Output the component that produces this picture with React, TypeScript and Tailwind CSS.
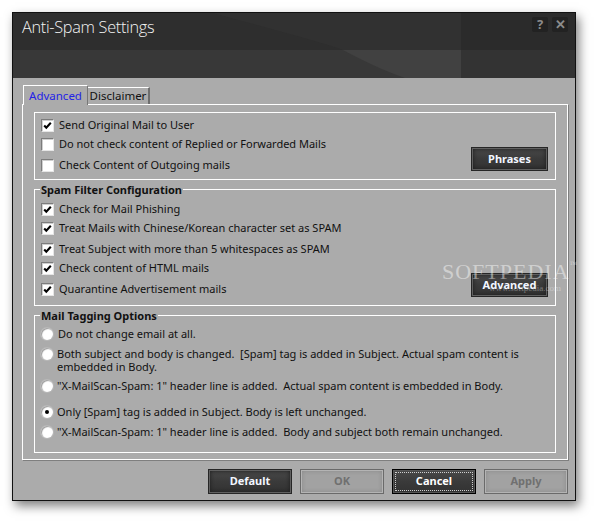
import React from "react";

function Check({ checked }: { checked: boolean }) {
  return (
    <span className="relative w-[13px] h-[13px] shrink-0 bg-white border border-t-[#7c7c7c] border-l-[#7c7c7c] border-r-[#e6e6e6] border-b-[#e6e6e6] shadow-[inset_1px_1px_0_#cfcfcf]">
      {checked && (
        <svg viewBox="0 0 11 11" className="absolute left-0 top-0 w-[11px] h-[11px]">
          <path d="M2.2 5.4 L4.3 7.6 L8.8 2.8" stroke="#000" strokeWidth="2.1" fill="none" />
        </svg>
      )}
    </span>
  );
}

function Radio({ checked }: { checked: boolean }) {
  return (
    <span className="relative w-[12px] h-[12px] shrink-0 rounded-full bg-white shadow-[inset_1px_1px_1px_#9a9a9a,0_0_0_1px_#b8b8b8] flex items-center justify-center">
      {checked && <span className="w-[4px] h-[4px] rounded-full bg-black" />}
    </span>
  );
}

function CheckRow({ label, checked, extra }: { label: string; checked: boolean; extra?: string }) {
  return (
    <div className={"flex items-center gap-[5px] h-[19px] " + (extra || "")}>
      <Check checked={checked} />
      <span className="whitespace-pre">{label}</span>
    </div>
  );
}

function RadioRow({ children, checked, extra }: { children: React.ReactNode; checked: boolean; extra?: string }) {
  return (
    <div className={"flex items-start gap-[4px] " + (extra || "")}>
      <span className="h-[19px] flex items-center">
        <Radio checked={checked} />
      </span>
      <span className="whitespace-pre leading-[13px] pt-[3px]">{children}</span>
    </div>
  );
}

function DarkButton({ label, extra }: { label: string; extra?: string }) {
  return (
    <button className={"w-[77px] h-[24px] border border-[#262626] bg-[linear-gradient(#4a4a4a,#3a3a3a_50%,#323232)] shadow-[inset_0_0_0_1px_#606060,inset_0_0_4px_1px_#1c1c1c] text-[#f2f6ff] font-bold text-[11px] " + (extra || "")}>
      {label}
    </button>
  );
}

export default function App() {
  return (
    <div className="w-[596px] h-[522px] bg-white pt-[12px] pl-[12px] font-['Noto_Sans',sans-serif] text-[11px] text-[#111]">
      <div className="w-[564px] h-[489px] border border-[#111] bg-[#ababab] shadow-[3px_5px_10px_rgba(0,0,0,0.5)] flex flex-col">
        {/* Title bar */}
        <div className="relative h-[65px] shrink-0 flex items-start justify-between">
          <svg className="absolute inset-0 w-full h-full" viewBox="0 0 562 65" preserveAspectRatio="none">
            <rect x="0" y="0" width="562" height="65" fill="#2e2e2e" />
            <rect x="0" y="37" width="448" height="28" fill="#383838" />
            <path d="M200 0 C 250 14, 300 26, 330 37 L 448 37 L 448 0 Z" fill="#313131" />
            <path d="M330 37 C 350 48, 372 58, 392 65 L 448 65 L 448 37 Z" fill="#414141" />
            <rect x="448" y="0" width="114" height="37" fill="#2b2b2b" />
            <rect x="448" y="37" width="114" height="28" fill="#333333" />
          </svg>
          <span className="relative ml-[9px] mt-[3px] text-[16.3px] leading-[22px] font-light tracking-[-0.3px] text-[#f4f4f4] font-['Open_Sans',sans-serif]">
            Anti-Spam Settings
          </span>
          <div className="relative flex gap-[4px] mt-[4px] mr-[7px]">
            <span className="w-[16px] h-[15px] rounded-[2px] bg-[#222] text-[#8c8c8c] font-bold text-[13px] leading-[15px] flex items-center justify-center">?</span>
            <span className="w-[16px] h-[15px] rounded-[2px] bg-[#222] text-[#8c8c8c] font-bold text-[13px] leading-[15px] flex items-center justify-center">✕</span>
          </div>
        </div>

        {/* Body */}
        <div className="flex flex-col flex-1">
          {/* Tabs */}
          <div className="flex items-end ml-[10px] mt-[7px] h-[19px]">
            <div className="relative z-10 h-[20px] w-[65px] -mb-[1px] bg-[#ababab] border-t border-l border-white border-r border-r-[#777] flex items-center justify-center text-[#2323e6] text-[11.5px] pt-[1px]">
              Advanced
            </div>
            <div className="h-[17px] w-[62px] border-t border-white border-r-2 border-r-[#6e6e6e] flex items-center justify-center text-[11.5px]">
              Disclaimer
            </div>
          </div>

          {/* Panel */}
          <div className="ml-[9px] w-[546px] h-[356px] border border-white shadow-[1px_1px_0_#7f7f7f] px-[11px] pt-[7px] flex flex-col gap-[9px]">
            {/* Group 1 */}
            <div className="relative h-[68px] border border-white flex justify-between">
              <div className="flex flex-col pl-[6px] pt-[3px]">
                <CheckRow label="Send Original Mail to User" checked={true} />
                <CheckRow label="Do not check content of Replied or Forwarded Mails" checked={false} />
                <CheckRow label="Check Content of Outgoing mails" checked={false} extra="mt-[2px]" />
              </div>
              <DarkButton label="Phrases" extra="mt-[34px] mr-[7px]" />
            </div>

            {/* Group 2 */}
            <div className="relative h-[117px] border border-white flex justify-between">
              <span className="absolute -top-[8px] left-[5px] px-[1px] bg-[#ababab] font-bold leading-[15px]">Spam Filter Configuration</span>
              <div className="flex flex-col pl-[6px] pt-[10px]">
                <CheckRow label="Check for Mail Phishing" checked={true} />
                <CheckRow label="Treat Mails with Chinese/Korean character set as SPAM" checked={true} />
                <CheckRow label="Treat Subject with more than 5 whitespaces as SPAM" checked={true} extra="mt-[2px]" />
                <CheckRow label="Check content of HTML mails" checked={true} />
                <CheckRow label="Quarantine Advertisement mails" checked={true} extra="mt-[2px]" />
              </div>
              <DarkButton label="Advanced" extra="mt-[83px] mr-[7px]" />
              <div className="absolute left-[407px] top-[71px] text-white/45 font-['Liberation_Serif',serif] leading-none pointer-events-none">
                <div className="text-[22px] tracking-[1px]">SOFTPEDIA<span className="text-[8px] align-top">™</span></div>
                <div className="text-[9px] ml-[47px] mt-[1px] text-white/35">www.softpedia.com</div>
              </div>
            </div>

            {/* Group 3 */}
            <div className="relative h-[138px] border border-white flex flex-col pl-[6px] pt-[8px]">
              <span className="absolute -top-[8px] left-[5px] px-[1px] bg-[#ababab] font-bold leading-[15px]">Mail Tagging Options</span>
              <RadioRow checked={false}><span className="ml-[1px]">Do not change email at all.</span></RadioRow>
              <RadioRow checked={false} extra="mt-[1px]">
                {"Both subject and body is changed.  [Spam] tag is added in Subject. Actual spam content is"}
                <br />
                {"embedded in Body."}
              </RadioRow>
              <RadioRow checked={false} extra="mt-[3px]">{"\"X-MailScan-Spam: 1\" header line is added.  Actual spam content is embedded in Body."}</RadioRow>
              <RadioRow checked={true} extra="mt-[7px]">{"Only [Spam] tag is added in Subject. Body is left unchanged."}</RadioRow>
              <RadioRow checked={false} extra="mt-[1px]">{"\"X-MailScan-Spam: 1\" header line is added.  Body and subject both remain unchanged."}</RadioRow>
            </div>
          </div>

          {/* Bottom buttons */}
          <div className="flex justify-end gap-[8px] mt-[9px] pr-[7px]">
            <button className="w-[84px] h-[25px] border border-[#262626] bg-[linear-gradient(#4a4a4a,#3a3a3a_50%,#323232)] shadow-[inset_0_0_0_1px_#606060,inset_0_0_4px_1px_#1c1c1c] text-[#f2f6ff] font-bold text-[11px]">Default</button>
            <button className="w-[84px] h-[25px] border border-[#6a6a6a] bg-[#a2a2a2] shadow-[inset_0_0_0_1px_#b4b4b4,inset_0_0_4px_1px_#8a8a8a] text-[#707070] font-bold text-[11px]">OK</button>
            <button className="relative w-[84px] h-[25px] border border-black bg-[linear-gradient(#4a4a4a,#3a3a3a_50%,#323232)] shadow-[inset_0_0_0_1px_#555] text-white font-bold text-[11px]">
              <span className="absolute inset-[2px] border border-dotted border-[#cfcfcf]" />
              <span className="relative">Cancel</span>
            </button>
            <button className="w-[84px] h-[25px] border border-[#6a6a6a] bg-[#a2a2a2] shadow-[inset_0_0_0_1px_#b4b4b4,inset_0_0_4px_1px_#8a8a8a] text-[#707070] font-bold text-[11px]">Apply</button>
          </div>
        </div>
      </div>
    </div>
  );
}
